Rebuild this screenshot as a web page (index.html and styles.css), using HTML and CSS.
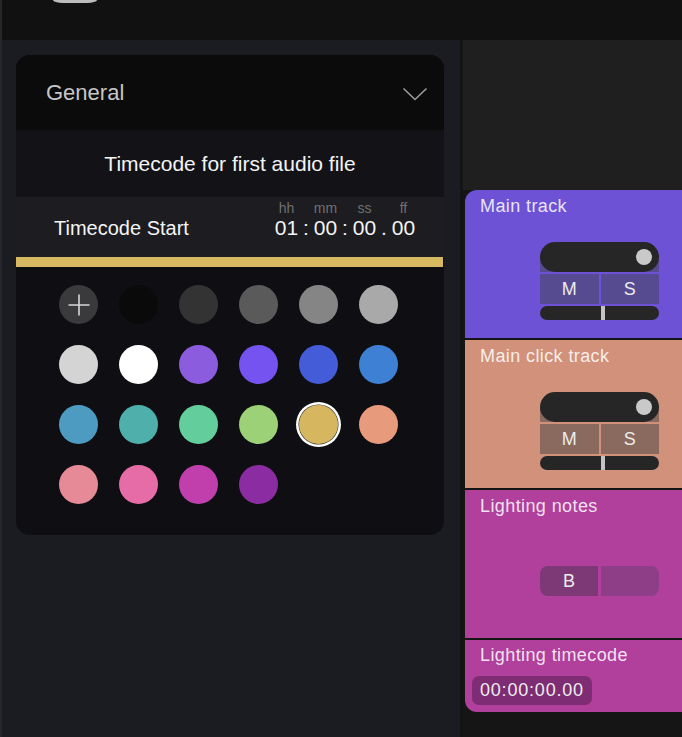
FILE: index.html
```html
<!DOCTYPE html>
<html lang="en">
<head>
<meta charset="utf-8">
<title>Track settings</title>
<link rel="stylesheet" href="styles.css">
</head>
<body>
<div class="app">
  <header class="topbar"><div class="top-pill"></div></header>
  <div class="main">
    <section class="left">
      <div class="card">
        <div class="card-head">
          <span class="card-title">General</span>
          <svg class="chev" width="26" height="14" viewBox="0 0 26 14"><polyline points="1.5,1.5 13,12.5 24.5,1.5" fill="none" stroke="#9c9c9c" stroke-width="1.6"/></svg>
        </div>
        <div class="card-desc">Timecode for first audio file</div>
        <div class="tc-row">
          <span class="tc-label">Timecode Start</span>
          <div class="tc">
            <div class="tc-unit"><span class="tc-cap">hh</span><span class="tc-val">01</span></div>
            <span class="tc-sep">:</span>
            <div class="tc-unit"><span class="tc-cap">mm</span><span class="tc-val">00</span></div>
            <span class="tc-sep">:</span>
            <div class="tc-unit"><span class="tc-cap">ss</span><span class="tc-val">00</span></div>
            <span class="tc-sep">.</span>
            <div class="tc-unit"><span class="tc-cap">ff</span><span class="tc-val">00</span></div>
          </div>
        </div>
        <div class="tc-bar"></div>
        <div class="swatches">
          <span class="sw sw-add"><svg width="22" height="22" viewBox="0 0 22 22"><path d="M11 0.5V21.5M0.5 11H21.5" stroke="#d8d8d8" stroke-width="1.6" fill="none"/></svg></span>
          <span class="sw c-black"></span>
          <span class="sw c-g1"></span>
          <span class="sw c-g2"></span>
          <span class="sw c-g3"></span>
          <span class="sw c-g4"></span>
          <span class="sw c-g5"></span>
          <span class="sw c-white"></span>
          <span class="sw c-violet"></span>
          <span class="sw c-indigo"></span>
          <span class="sw c-blue"></span>
          <span class="sw c-sky"></span>
          <span class="sw c-steel"></span>
          <span class="sw c-teal"></span>
          <span class="sw c-mint"></span>
          <span class="sw c-lime"></span>
          <span class="sw c-gold selected"></span>
          <span class="sw c-salmon"></span>
          <span class="sw c-rose"></span>
          <span class="sw c-pink"></span>
          <span class="sw c-magenta"></span>
          <span class="sw c-purple"></span>
        </div>
      </div>
    </section>
    <div class="divider"></div>
    <section class="right">
      <div class="right-top"></div>
      <div class="tracks">
        <div class="track t-main">
          <div class="track-title">Main track</div>
          <div class="mixer">
            <div class="pill-wrap"><div class="pill"><span class="knob"></span></div></div>
            <div class="ms"><span class="ms-btn">M</span><span class="ms-btn">S</span></div>
            <div class="slider"></div>
          </div>
        </div>
        <div class="track t-click">
          <div class="track-title">Main click track</div>
          <div class="mixer">
            <div class="pill-wrap"><div class="pill"><span class="knob"></span></div></div>
            <div class="ms"><span class="ms-btn">M</span><span class="ms-btn">S</span></div>
            <div class="slider"></div>
          </div>
        </div>
        <div class="track t-notes">
          <div class="track-title">Lighting notes</div>
          <div class="bank"><span class="bank-btn bank-on">B</span><span class="bank-btn bank-off"></span></div>
        </div>
        <div class="track t-tc">
          <div class="track-title">Lighting timecode</div>
          <div class="tc-box">00:00:00.00</div>
        </div>
      </div>
    </section>
  </div>
</div>
</body>
</html>
```

FILE: styles.css
```css
* { box-sizing: border-box; }
html, body {
  margin: 0;
  padding: 0;
  width: 682px;
  height: 737px;
  overflow: hidden;
  background: #111111;
  font-family: "Liberation Sans", Arial, sans-serif;
}
.app {
  display: flex;
  flex-direction: column;
  height: 737px;
  border-left: 2px solid #26272a;
}
.topbar {
  height: 40px;
  flex: none;
  background: #111111;
  padding-left: 51px;
}
.top-pill {
  width: 44px;
  height: 3px;
  background: #bdbdbd;
  border-radius: 0 0 10px 10px / 0 0 3px 3px;
}
.main {
  flex: 1;
  display: flex;
  min-height: 0;
}
.left {
  width: 458px;
  flex: none;
  background: #1b1c21;
  padding: 15px 16px 0 14px;
}
.divider {
  width: 3px;
  flex: none;
  background: #141414;
}
.right {
  flex: 1;
  display: flex;
  flex-direction: column;
  background: #151515;
}
.right-top {
  height: 150px;
  flex: none;
  background: #1f1f1f;
}
.card {
  border-radius: 14px;
  overflow: hidden;
  background: #0f0f13;
}
.card-head {
  height: 75px;
  background: #0b0b0b;
  display: flex;
  align-items: center;
  justify-content: space-between;
  padding: 1px 16px 0 30px;
}
.card-title {
  font-size: 22px;
  color: #c6c6c6;
}
.chev { display: block; margin-top: 1px; }
.card-desc {
  height: 67px;
  background: #131317;
  display: flex;
  align-items: center;
  justify-content: center;
  font-size: 21px;
  color: #f4f4f4;
  padding-top: 1px;
}
.tc-row {
  height: 60px;
  background: #1c1c21;
  display: flex;
  align-items: flex-end;
  justify-content: space-between;
  padding: 0 29px 18px 38px;
}
.tc-label {
  font-size: 20px;
  line-height: 22px;
  color: #f4f4f4;
}
.tc {
  display: flex;
  align-items: flex-end;
}
.tc-unit {
  display: flex;
  flex-direction: column;
  align-items: center;
  width: 23px;
}
.tc-cap {
  font-size: 14px;
  line-height: 15px;
  color: #707070;
  margin-bottom: 1px;
}
.tc-val, .tc-sep {
  font-size: 21px;
  line-height: 22px;
  color: #f4f4f4;
}
.tc-sep {
  width: 16px;
  text-align: center;
}
.tc-bar {
  height: 10px;
  background: #d6b860;
  border-right: 1px solid #0f0f13;
}
.swatches {
  display: grid;
  grid-template-columns: repeat(6, 39px);
  grid-auto-rows: 39px;
  gap: 21px;
  padding: 18px 0 31px 43px;
}
.sw {
  display: flex;
  align-items: center;
  justify-content: center;
  width: 39px;
  height: 39px;
  border-radius: 50%;
}
.sw-add { background: #3a3a3c; }
.c-black { background: #0a0a0a; }
.c-g1 { background: #333333; }
.c-g2 { background: #5a5a5a; }
.c-g3 { background: #858585; }
.c-g4 { background: #a9a9a9; }
.c-g5 { background: #d4d4d4; }
.c-white { background: #ffffff; }
.c-violet { background: #8b5cdd; }
.c-indigo { background: #7453f0; }
.c-blue { background: #445cd7; }
.c-sky { background: #3e80d4; }
.c-steel { background: #4e9bc1; }
.c-teal { background: #4fafab; }
.c-mint { background: #64cd9c; }
.c-lime { background: #9cd177; }
.c-gold { background: #d6b760; }
.c-salmon { background: #e89a7c; }
.c-rose { background: #e68a98; }
.c-pink { background: #e56ca6; }
.c-magenta { background: #c03fac; }
.c-purple { background: #8c2ca2; }
.sw.selected {
  box-shadow: 0 0 0 0.5px #2a2a2a, 0 0 0 3px #ffffff;
}

.tracks {
  flex: 1;
  display: flex;
  flex-direction: column;
  gap: 2px;
  padding-left: 2px;
  background: #151515;
}
.track {
  height: 148px;
  flex: none;
  padding: 6px 0 0 15px;
}
.t-main { background: #6e52d6; border-top-left-radius: 12px; --ms: #564a91; }
.t-click { background: #d2917a; --ms: #8a6a5e; }
.t-notes { background: #b0409c; }
.t-tc {
  background: #b0409c;
  height: 72px;
  padding-top: 5px;
  border-bottom-left-radius: 12px;
}
.track-title {
  font-size: 18px;
  line-height: 20px;
  letter-spacing: 0.4px;
  color: rgba(255, 255, 255, 0.86);
}
.mixer {
  width: 119px;
  margin: 26px 0 0 60px;
}
.pill-wrap {
  background: linear-gradient(to bottom, transparent 15px, var(--ms) 15px);
}
.pill {
  height: 30px;
  border-radius: 15px;
  background: #262626;
  display: flex;
  align-items: center;
  justify-content: flex-end;
  padding-right: 7px;
}
.knob {
  width: 16px;
  height: 16px;
  border-radius: 50%;
  background: #c9c9c9;
}
.ms {
  display: flex;
  gap: 2px;
  margin-top: 2px;
}
.ms-btn {
  flex: 1;
  height: 30px;
  background: var(--ms);
  color: #ececec;
  font-size: 18px;
  line-height: 30px;
  text-align: center;
}
.slider {
  height: 14px;
  margin-top: 2px;
  border-radius: 7px;
  background: linear-gradient(to right, #262626 61px, #c4c4c4 61px, #c4c4c4 65px, #262626 65px);
}
.bank {
  display: flex;
  gap: 3px;
  width: 119px;
  margin: 50px 0 0 60px;
}
.bank-btn {
  flex: 1;
  height: 30px;
  line-height: 30px;
  text-align: center;
  font-size: 18px;
  color: #ececec;
}
.bank-on { background: #7c3975; border-radius: 8px 0 0 8px; }
.bank-off { background: #8e3e87; border-radius: 0 8px 8px 0; }
.tc-box {
  display: inline-block;
  margin: 11px 0 0 -8px;
  height: 29px;
  line-height: 29px;
  padding: 0 8px;
  border-radius: 7px;
  background: #7e2c73;
  font-size: 18px;
  letter-spacing: 0.8px;
  color: #eeeeee;
}
```
